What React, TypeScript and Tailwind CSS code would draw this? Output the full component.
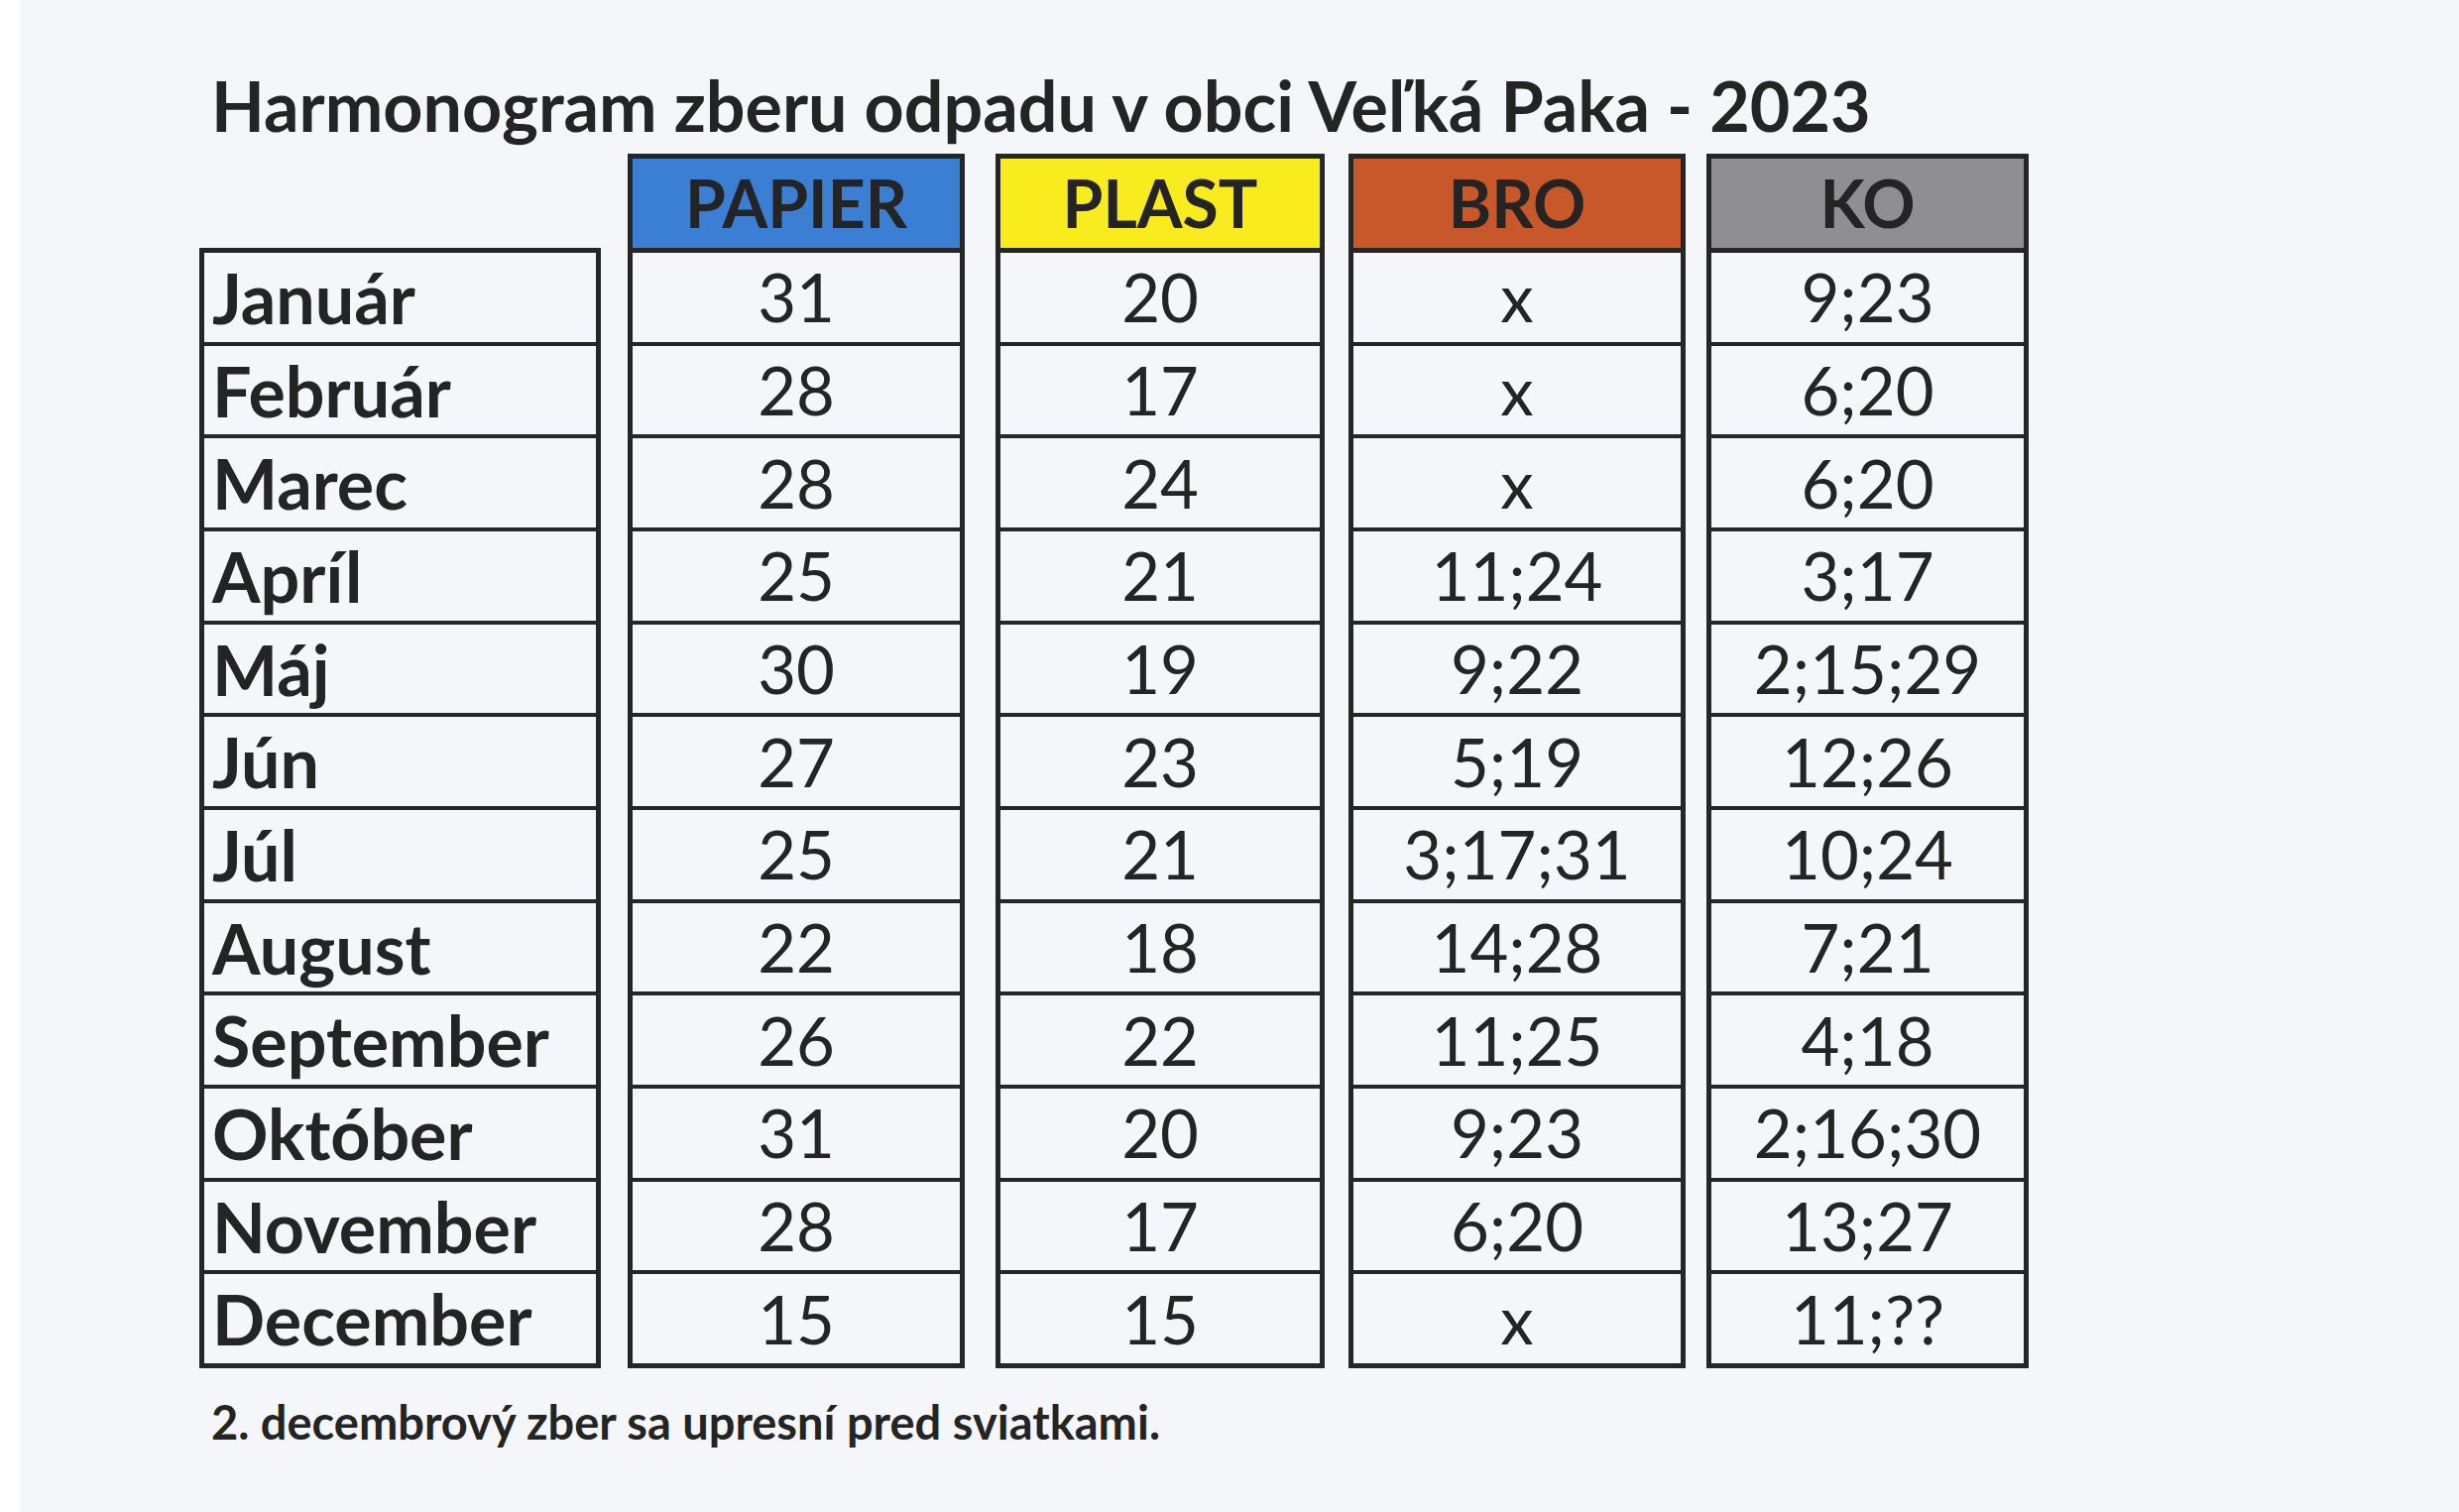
import React from "react";

const months = [
  { name: "Január", papier: "31", plast: "20", bro: "x", ko: "9;23" },
  { name: "Február", papier: "28", plast: "17", bro: "x", ko: "6;20" },
  { name: "Marec", papier: "28", plast: "24", bro: "x", ko: "6;20" },
  { name: "Apríl", papier: "25", plast: "21", bro: "11;24", ko: "3;17" },
  { name: "Máj", papier: "30", plast: "19", bro: "9;22", ko: "2;15;29" },
  { name: "Jún", papier: "27", plast: "23", bro: "5;19", ko: "12;26" },
  { name: "Júl", papier: "25", plast: "21", bro: "3;17;31", ko: "10;24" },
  { name: "August", papier: "22", plast: "18", bro: "14;28", ko: "7;21" },
  { name: "September", papier: "26", plast: "22", bro: "11;25", ko: "4;18" },
  { name: "Október", papier: "31", plast: "20", bro: "9;23", ko: "2;16;30" },
  { name: "November", papier: "28", plast: "17", bro: "6;20", ko: "13;27" },
  { name: "December", papier: "15", plast: "15", bro: "x", ko: "11;??" },
];

type Key = "papier" | "plast" | "bro" | "ko";

const columns: { key: Key; label: string; head: string; width: string; ml: string }[] = [
  { key: "papier", label: "PAPIER", head: "bg-[#3b7fd4]", width: "w-[340px]", ml: "ml-[27px]" },
  { key: "plast", label: "PLAST", head: "bg-[#f8ec1e]", width: "w-[332px]", ml: "ml-[31px]" },
  { key: "bro", label: "BRO", head: "bg-[#c8582a]", width: "w-[340px]", ml: "ml-[24px]" },
  { key: "ko", label: "KO", head: "bg-[#8f8f92]", width: "w-[325px]", ml: "ml-[21px]" },
];

const Rows = ({ children }: { children: React.ReactNode }) => (
  <div className="flex flex-col h-[1120px] divide-y-[4px] divide-[#262626]">{children}</div>
);

export default function App() {
  return (
    <div className="w-[2480px] h-[1525px] bg-white flex overflow-hidden" style={{ fontFamily: "Lato, 'Open Sans', sans-serif" }}>
      <div className="ml-[20px] flex-1 bg-[#f4f6f9] text-[#242424] pl-[181px] pt-[71px] flex flex-col">
        <h1 className="text-[70px] leading-none font-bold ml-[12px]">Harmonogram zberu odpadu v obci Veľká Paka - 2023</h1>

        <div className="flex items-end mt-[14px]">
          <div className="w-[405px] border-[5px] border-[#262626]">
            <Rows>
              {months.map((m) => (
                <div key={m.name} className="flex-1 flex items-center pl-[8px] text-[70px] leading-none font-bold">
                  {m.name}
                </div>
              ))}
            </Rows>
          </div>

          {columns.map((c) => (
            <div key={c.key} className={`${c.width} ${c.ml} border-[5px] border-[#262626]`}>
              <div className={`${c.head} h-[95px] border-b-[5px] border-[#262626] flex items-center justify-center text-[66px] leading-none font-bold`}>
                {c.label}
              </div>
              <Rows>
                {months.map((m) => (
                  <div key={m.name} className="flex-1 flex items-center justify-center text-[67px] leading-none">
                    {m[c.key]}
                  </div>
                ))}
              </Rows>
            </div>
          ))}
        </div>

        <p className="mt-[31px] ml-[12px] text-[47px] leading-none font-bold">2. decembrový zber sa upresní pred sviatkami.</p>
      </div>
    </div>
  );
}
